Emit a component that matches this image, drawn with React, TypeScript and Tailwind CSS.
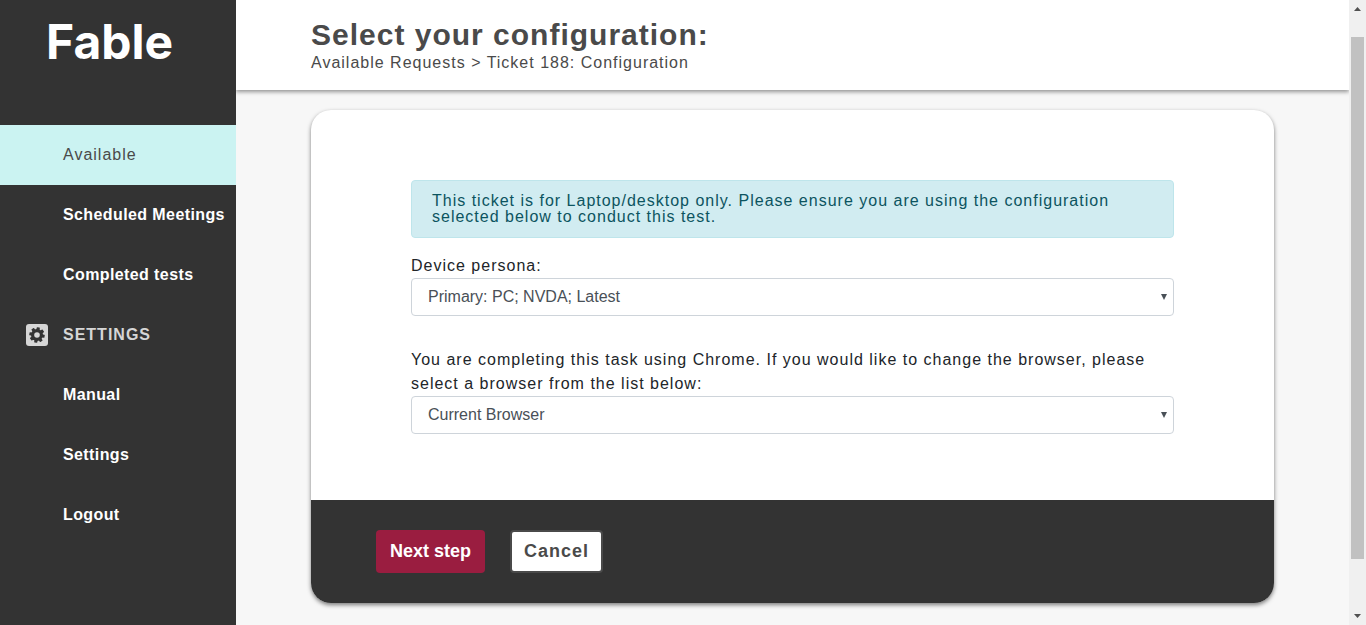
import React from "react";

type NavItem = { label: string; active?: boolean };

const ticketLinks: NavItem[] = [
  { label: "Available", active: true },
  { label: "Scheduled Meetings" },
  { label: "Completed tests" },
];

const settingsLinks: NavItem[] = [
  { label: "Manual" },
  { label: "Settings" },
  { label: "Logout" },
];

function NavLink({ label, active }: NavItem) {
  return (
    <li>
      <a
        href="#"
        aria-current={active ? "page" : undefined}
        className={
          active
            ? "flex h-15 items-center whitespace-nowrap bg-[#cbf3f2] pl-[63px] text-[#4a4a4a]"
            : "flex h-15 items-center whitespace-nowrap pl-[63px] font-bold tracking-wide text-white"
        }
      >
        {label}
      </a>
    </li>
  );
}

function GearIcon() {
  return (
    <svg viewBox="0 0 22 22" className="size-[22px]" aria-hidden="true">
      <rect width="22" height="22" rx="3" fill="#d6d6d6" />
      <g fill="#333333">
        <circle cx="11" cy="11" r="6" />
        {[0, 45, 90, 135].map((a) => (
          <rect key={a} x="9.4" y="3.3" width="3.2" height="15.4" rx="0.5" transform={`rotate(${a + 10} 11 11)`} />
        ))}
      </g>
      <circle cx="11" cy="11" r="2.8" fill="#d6d6d6" />
    </svg>
  );
}

function Sidebar() {
  return (
    <aside className="z-10 w-[236px] shrink-0 bg-[#333333]">
      <div className="h-[125px] pl-[46px] pt-3">
        <a href="#" className="font-[Inter,sans-serif] text-[48px] leading-[60px] font-bold tracking-normal text-white">
          Fable
        </a>
      </div>
      <nav>
        <ul>
          {ticketLinks.map((item) => (
            <NavLink key={item.label} {...item} />
          ))}
        </ul>
        <h2 className="flex h-15 items-center gap-[15px] pl-[26px] font-bold text-[#d6d6d6]">
          <GearIcon />
          SETTINGS
        </h2>
        <ul>
          {settingsLinks.map((item) => (
            <NavLink key={item.label} {...item} />
          ))}
        </ul>
      </nav>
    </aside>
  );
}

function SelectField({ id, label, option }: { id: string; label: string; option: string }) {
  return (
    <div>
      <label htmlFor={id} className="block leading-6 text-[#212529]">
        {label}
      </label>
      <div className="relative">
        <select
          id={id}
          className="block h-[38px] w-full appearance-none rounded border border-[#ced4da] bg-white px-4 tracking-normal text-[#495057]"
        >
          <option>{option}</option>
        </select>
        <svg
          viewBox="0 0 6 6"
          className="pointer-events-none absolute right-[7px] top-4 size-[6px] fill-[#495057]"
          aria-hidden="true"
        >
          <path d="M0 0h6L3 6z" />
        </svg>
      </div>
    </div>
  );
}

function ConfigurationCard() {
  return (
    <form
      onSubmit={(e) => e.preventDefault()}
      className="mx-[75px] mt-5 mb-[22px] overflow-hidden rounded-[20px] bg-white shadow-[0_2px_4px_rgba(0,0,0,0.5)]"
    >
      <div className="flex flex-col px-[100px] pt-[70px] pb-[66px]">
        <p className="mb-4 rounded border border-[#bee5eb] bg-[#d1ecf1] px-5 py-3 leading-4 text-[#0c5460]">
          This ticket is for Laptop/desktop only. Please ensure you are using the configuration selected below to conduct
          this test.
        </p>
        <div className="flex flex-col gap-8">
          <SelectField id="persona" label="Device persona:" option="Primary: PC; NVDA; Latest" />
          <SelectField
            id="browser"
            label="You are completing this task using Chrome. If you would like to change the browser, please select a browser from the list below:"
            option="Current Browser"
          />
        </div>
      </div>
      <div className="flex gap-[25px] bg-[#333333] px-[65px] py-[30px] text-lg font-bold">
        <button type="submit" className="h-[43px] rounded bg-[#9a1d40] px-3.5 pb-0.5 tracking-normal text-white">
          Next step
        </button>
        <button
          type="button"
          className="h-[43px] rounded border-2 border-[#4a4a4a] bg-white px-3 pb-0.5 tracking-[1px] text-[#4a4a4a]"
        >
          Cancel
        </button>
      </div>
    </form>
  );
}

function ScrollRail() {
  return (
    <div className="sticky top-0 flex h-screen w-[17px] shrink-0 flex-col items-center bg-[#f0f0f0]" aria-hidden="true">
      <svg viewBox="0 0 17 17" className="size-[17px] shrink-0 fill-[#505050]">
        <path d="M5 11h7L8.500 7z" />
      </svg>
      <div className="mt-5 w-[13px] grow bg-[#c1c1c1]" />
      <svg viewBox="0 0 17 17" className="mt-[49px] size-[17px] shrink-0 fill-[#505050]">
        <path d="M5 6h7L8.500 10z" />
      </svg>
    </div>
  );
}

export default function App() {
  return (
    <div className="flex min-h-screen bg-[#f7f7f7] font-['Liberation_Sans',Arial,sans-serif] text-base tracking-[1px]">
      <Sidebar />
      <main className="min-w-0 grow">
        <header className="h-[90px] bg-white px-[75px] pt-4 text-[#4a4a4a] shadow-[0_2px_4px_rgba(0,0,0,0.4)]">
          <h1 className="text-[30px] leading-[38px] font-bold">Select your configuration:</h1>
          <p className="leading-[18px]">Available Requests &gt; Ticket 188: Configuration</p>
        </header>
        <ConfigurationCard />
      </main>
      <ScrollRail />
    </div>
  );
}
